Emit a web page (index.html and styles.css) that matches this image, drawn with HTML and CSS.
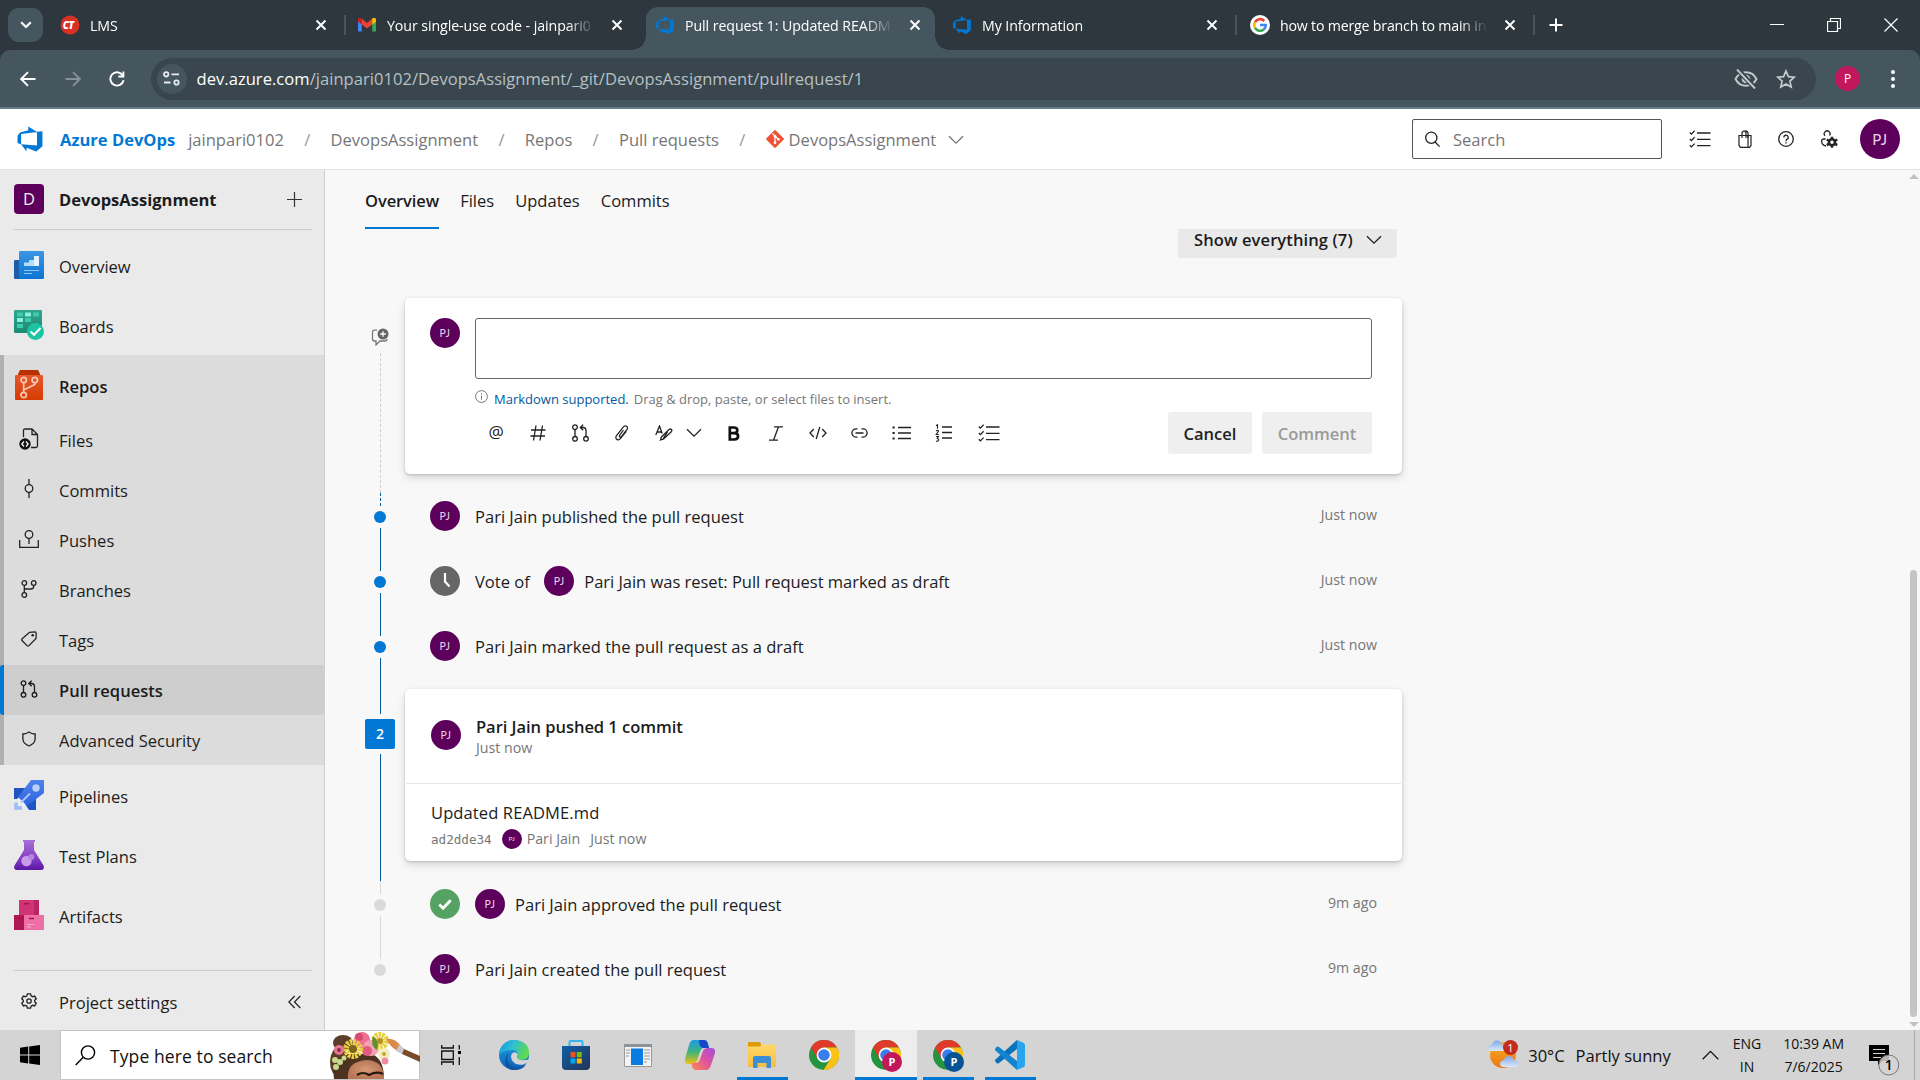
FILE: index.html
```html
<!DOCTYPE html>
<html lang="en">
<head>
<meta charset="utf-8">
<title>Pull request 1: Updated README.md - Repos</title>
<link rel="stylesheet" href="styles.css">
</head>
<body>
<svg class="defs" aria-hidden="true">
  <defs>
    <linearGradient id="g-blue" x1="0" y1="0" x2="0" y2="1"><stop offset="0" stop-color="#3c96e4"/><stop offset="1" stop-color="#0b74d4"/></linearGradient>
    <linearGradient id="g-green" x1="0" y1="0" x2="0" y2="1"><stop offset="0" stop-color="#2ea58c"/><stop offset="1" stop-color="#1d8a74"/></linearGradient>
    <linearGradient id="g-red" x1="0" y1="0" x2="0" y2="1"><stop offset="0" stop-color="#e5592d"/><stop offset="1" stop-color="#d73b02"/></linearGradient>
    <linearGradient id="g-pipe" x1="0" y1="0" x2="0" y2="1"><stop offset="0" stop-color="#5083ec"/><stop offset="1" stop-color="#2b63dc"/></linearGradient>
    <linearGradient id="g-test" x1="0" y1="0" x2="0" y2="1"><stop offset="0" stop-color="#a96fd6"/><stop offset=".6" stop-color="#8340c4"/><stop offset="1" stop-color="#5a17a4"/></linearGradient>
    <linearGradient id="g-edge1" x1="0" y1="0" x2="1" y2=".3"><stop offset="0" stop-color="#1794dd"/><stop offset=".5" stop-color="#2dc0d4"/><stop offset="1" stop-color="#5fd853"/></linearGradient>
    <linearGradient id="g-edge2" x1="0" y1="0" x2="0" y2="1"><stop offset="0" stop-color="#1fa4e6"/><stop offset="1" stop-color="#0c5fb8"/></linearGradient>
    <linearGradient id="g-store" x1="0" y1="0" x2="1" y2="1"><stop offset="0" stop-color="#0f5fa8"/><stop offset="1" stop-color="#233457"/></linearGradient>
    <linearGradient id="g-cop1" x1="0" y1="0" x2="0" y2="1"><stop offset="0" stop-color="#1b9be8"/><stop offset=".5" stop-color="#3fb37c"/><stop offset="1" stop-color="#f2c20f"/></linearGradient>
    <linearGradient id="g-cop2" x1="1" y1="0" x2="0" y2="1"><stop offset="0" stop-color="#a24be0"/><stop offset=".5" stop-color="#e0539b"/><stop offset="1" stop-color="#fb8a4e"/></linearGradient>
    <linearGradient id="g-folder" x1="0" y1="0" x2="0" y2="1"><stop offset="0" stop-color="#ffd869"/><stop offset="1" stop-color="#f6bd3c"/></linearGradient>
    <linearGradient id="g-sun" x1="0" y1="0" x2="0" y2="1"><stop offset="0" stop-color="#f3b024"/><stop offset="1" stop-color="#ef7513"/></linearGradient>
    <linearGradient id="g-cloud" x1="0" y1="0" x2="0" y2="1"><stop offset="0" stop-color="#82a8e4"/><stop offset="1" stop-color="#dbe8fb"/></linearGradient>
    <radialGradient id="g-face"><stop offset="0" stop-color="#d79a78"/><stop offset="1" stop-color="#b87655"/></radialGradient>
  </defs>
  <symbol id="i-close" viewBox="0 0 12 12"><path d="M1.500 1.500l9 9M10.500 1.500l-9 9" stroke="currentColor" stroke-width="1.900" fill="none"/></symbol>
  <symbol id="i-chev" viewBox="0 0 16 10"><path d="M1 1.200l7 7 7-7" stroke="currentColor" stroke-width="1.300" fill="none"/></symbol>
  <symbol id="i-azdo" viewBox="0 0 18 18"><path d="M17 4v9.700l-4 3.300-6.200-2.300V17L3.300 12.400l10.200.8V4.400zM13.600 4.500L7.900 1v2.300L2.600 4.900 1 6.900v4.600l2.300 1V5.800z" fill="#0078d4"/></symbol>
  <symbol id="i-pr" viewBox="0 0 18 18"><g fill="none" stroke="currentColor" stroke-width="1.300"><circle cx="3.500" cy="3.200" r="2.300"/><circle cx="3.500" cy="14.800" r="2.300"/><circle cx="14.500" cy="14.800" r="2.300"/><path d="M3.500 5.500v7M14.500 12.500V6.500a3 3 0 0 0-3-3H9M11.700.7L8.800 3.500l2.900 2.800"/></g></symbol>
  <symbol id="i-checks" viewBox="0 0 22 18"><g fill="none" stroke="currentColor" stroke-width="1.300"><path d="M8 3h13.500M8 9.300h13.500M8 15.600h13.500M.8 2.500l1.600 1.600L5.600.8M.8 9l1.600 1.600L5.600 7.300M.8 15.300l1.600 1.600 3.200-3.300"/></g></symbol>
  <symbol id="i-chrome" viewBox="0 0 30 30"><circle cx="15" cy="15" r="15" fill="#24943f"/><path d="M2 7.500A15 15 0 0 1 28 7.500H15L8.500 18.700z" fill="#df3a2c"/><path d="M28 7.500A15 15 0 0 1 14.500 30l7-11.300L15 7.500z" fill="#fbc116"/><circle cx="15" cy="15" r="7.400" fill="#fff"/><circle cx="15" cy="15" r="5.800" fill="#3a7ded"/></symbol>
</svg>

<header class="tabstrip">
  <button class="tab-search"><svg width="12" height="8" viewBox="0 0 12 8"><path d="M1.200 1.200L6 6l4.800-4.800" stroke="#fff" stroke-width="2.200" fill="none"/></svg></button>
  <div class="tab first">
    <svg class="fav" width="20" height="22" viewBox="0 0 20 22"><circle cx="10" cy="11" r="9.500" fill="#d93025"/><text x="2.800" y="14.500" font-family="Open Sans" font-size="10" font-weight="800" font-style="italic" fill="#fff" letter-spacing="-.5">CT</text></svg>
    <span class="tab-title">LMS</span><svg class="x" width="12" height="12"><use href="#i-close"/></svg><i class="sep"></i>
  </div>
  <div class="tab">
    <svg class="fav" width="20" height="16" viewBox="0 0 20 16"><path d="M1 3v11.500h3.800V6z" fill="#4285f4"/><path d="M19 3v11.500h-3.800V6z" fill="#34a853"/><path d="M4.800 1.500L10 6l5.200-4.500v6L10 11.500 4.800 7.500z" fill="#ea4335"/><path d="M1 3C1 .8 3.200.2 4.800 1.500v6L1 4.700z" fill="#c5221f"/><path d="M19 3c0-2.200-2.200-2.800-3.800-1.500v6L19 4.700z" fill="#fbbc04"/></svg>
    <span class="tab-title">Your single-use code - jainpari0</span><svg class="x" width="12" height="12"><use href="#i-close"/></svg>
  </div>
  <div class="tab active">
    <svg class="fav" width="22" height="22"><use href="#i-azdo"/></svg>
    <span class="tab-title">Pull request 1: Updated READM</span><svg class="x" width="12" height="12"><use href="#i-close"/></svg>
  </div>
  <div class="tab">
    <svg class="fav" width="22" height="22"><use href="#i-azdo"/></svg>
    <span class="tab-title">My Information</span><svg class="x" width="12" height="12"><use href="#i-close"/></svg><i class="sep"></i>
  </div>
  <div class="tab">
    <svg class="fav" width="20" height="20" viewBox="0 0 20 20"><circle cx="10" cy="10" r="10" fill="#fff"/><g fill="none" stroke-width="2.600"><path d="M14.300 6A5.800 5.800 0 0 0 5 7.100" stroke="#ea4335"/><path d="M5 7.100a5.800 5.800 0 0 0 0 5.800" stroke="#fbbc05"/><path d="M5 12.900a5.800 5.800 0 0 0 8.700 1.500" stroke="#34a853"/><path d="M13.700 14.400c1.500-1.200 2.100-2.700 2.100-4.400H10" stroke="#4285f4"/></g></svg>
    <span class="tab-title snug">how to merge branch to main in</span><svg class="x" width="12" height="12"><use href="#i-close"/></svg><i class="sep"></i>
  </div>
  <svg class="newtab" width="14" height="14" viewBox="0 0 14 14"><path d="M7 .5v13M.5 7h13" stroke="#fff" stroke-width="2"/></svg>
  <div class="win">
    <svg width="14" height="14" viewBox="0 0 14 14"><path d="M0 6.500h14" stroke="#fff"/></svg>
    <svg width="14" height="14" viewBox="0 0 14 14"><path d="M.5 3.500h10v10h-10zM3.500 3.500v-3h10v10h-3" fill="none" stroke="#fff" stroke-width="1.200"/></svg>
    <svg width="14" height="14" viewBox="0 0 14 14"><path d="M.5.5l13 13M13.500.5l-13 13" stroke="#fff" stroke-width="1.200"/></svg>
  </div>
</header>

<div class="toolbar-wrap"><div class="toolbar">
  <svg width="16" height="16" viewBox="0 0 16 16"><path d="M15.500 8H1.500M8 1.200L1.200 8 8 14.800" fill="none" stroke="#fff" stroke-width="1.900"/></svg>
  <svg width="16" height="16" viewBox="0 0 16 16"><path d="M.5 8h14M8 1.200L14.800 8 8 14.800" fill="none" stroke="#84929a" stroke-width="1.900"/></svg>
  <svg width="16" height="16" viewBox="0 0 16 16"><path d="M13.500 4A6.700 6.700 0 1 0 14.600 9.300M14.400.5v5H9.300" fill="none" stroke="#fff" stroke-width="1.900"/></svg>
  <div class="omnibox">
    <span class="site"><svg width="17" height="15" viewBox="0 0 17 15"><g fill="none" stroke="#e8eaed" stroke-width="1.800"><circle cx="3.200" cy="3.300" r="2.200"/><path d="M8.500 3.300H16M1 11.500h6.500"/><circle cx="13.500" cy="11.500" r="2.200"/></g></svg></span>
    <span class="url"><b>dev.azure.com</b>/jainpari0102/DevopsAssignment/_git/DevopsAssignment/pullrequest/1</span>
    <svg class="eye" width="24" height="20" viewBox="0 0 24 20"><path d="M1.500 10C4 5 8 3.200 12 3.200S20 5 22.500 10C20 15 16 16.800 12 16.800S4 15 1.500 10z" fill="none" stroke="#c3c9cc" stroke-width="1.900"/><circle cx="12" cy="10" r="4.300" fill="#c3c9cc"/><path d="M3 0l18 19" stroke="#39464d" stroke-width="5"/><path d="M3 0.500l18 19" stroke="#c3c9cc" stroke-width="1.900"/></svg>
    <svg class="star" width="20" height="20" viewBox="0 0 20 20"><path d="M10 2l2.400 5.600 6 .5-4.500 4 1.300 5.900L10 14.900 4.800 18l1.300-5.900-4.500-4 6-.5z" fill="none" stroke="#c3c9cc" stroke-width="1.700"/></svg>
  </div>
  <span class="profile">P</span>
  <svg width="6" height="20" viewBox="0 0 6 20"><g fill="#fff"><circle cx="3" cy="3" r="2"/><circle cx="3" cy="10" r="2"/><circle cx="3" cy="17" r="2"/></g></svg>
</div></div>

<div class="suite">
  <svg width="28" height="28"><use href="#i-azdo"/></svg>
  <nav class="crumbs">
    <strong>Azure DevOps</strong><span>jainpari0102</span><em>/</em><span>DevopsAssignment</span><em>/</em><span>Repos</span><em>/</em><span>Pull requests</span><em>/</em>
    <svg class="git" width="18" height="18" viewBox="0 0 18 18"><path d="M9 .3L17.700 9 9 17.700.3 9z" fill="#f05033" stroke="#f05033" stroke-linejoin="round"/><path d="M6.500 3.500l2.500 2.500v7M9.500 6.500l3 3" stroke="#fff" stroke-width="1.200" fill="none"/><circle cx="9" cy="6.200" r="1.400" fill="#fff"/><circle cx="9" cy="12.800" r="1.400" fill="#fff"/><circle cx="12.300" cy="9.300" r="1.400" fill="#fff"/></svg>
    <span>DevopsAssignment</span><svg class="crumb-chev" width="16" height="10"><use href="#i-chev"/></svg>
  </nav>
  <div class="search"><svg width="17" height="17" viewBox="0 0 17 17"><circle cx="7.300" cy="6.800" r="5.600" fill="none" stroke="#222" stroke-width="1.300"/><path d="M11 11l4.600 4.600" stroke="#222" stroke-width="1.300"/></svg><span>Search</span></div>
  <div class="suite-icons">
    <svg width="22" height="18"><use href="#i-checks"/></svg>
    <svg width="14" height="18" viewBox="0 0 14 18"><g fill="none" stroke="#222" stroke-width="1.200"><path d="M1 5.500h12v10l-1.500 1.800h-9L1 15.500zM4 8V2.500L5.500 1h1L8 2.500V8M7 1.200L8.500 1 10 2.500V8"/><path d="M10 5.500v12" /></g></svg>
    <svg width="16" height="16" viewBox="0 0 16 16"><circle cx="8" cy="8" r="7.300" fill="none" stroke="#222" stroke-width="1.300"/><path d="M5.800 6.500a2.200 2.200 0 1 1 3.300 1.800C8.200 8.900 8 9.200 8 10.200M8 11.300v1.300" fill="none" stroke="#222" stroke-width="1.300"/></svg>
    <svg width="18" height="18" viewBox="0 0 18 18"><path d="M9.500 5.500A2.900 2.900 0 1 0 5 5.800M5.500 9h-2A2 2 0 0 0 1.600 11c0 2.500 1.500 4.500 4.400 5" fill="none" stroke="#222" stroke-width="1.300"/><circle cx="12" cy="12.300" r="3" fill="none" stroke="#222" stroke-width="2.600"/><path d="M12 6.800v2M12 15.800v2M6.800 9.500l2 1.200M15.200 13.900l2 1.200M6.800 15.100l2-1.200M15.200 10.700l2-1.200" stroke="#222" stroke-width="2.400"/></svg>
  </div>
  <span class="avatar xl">PJ</span>
</div>

<div class="workspace">
  <aside class="sidebar">
    <div class="project"><span class="proj-tile">D</span><strong>DevopsAssignment</strong><svg width="15" height="15" viewBox="0 0 15 15"><path d="M7.500 0v15M0 7.500h15" stroke="#333" stroke-width="1.200"/></svg></div>
    <a class="hub"><span class="ico"><svg width="30" height="28" viewBox="0 0 30 28"><rect y="9" width="8" height="19" rx="1" fill="#1a5ea8"/><rect x="5" width="25" height="28" rx="1.200" fill="url(#g-blue)"/><path d="M10 15v-3.500h5V9h5V5h5v10z" fill="#b5dcfa"/><path d="M20 15V5h5v10z" fill="#e4f3ff"/><path d="M10 19.500h15M10 22.500h8" stroke="#8ec5f4" stroke-width="1"/></svg></span>Overview</a>
    <a class="hub"><span class="ico"><svg width="30" height="30" viewBox="0 0 30 30"><rect width="28" height="23" rx="1.200" fill="url(#g-green)"/><g fill="#3dcaae"><path d="M3 2.500h6v4H3zM19 2.500h6v4h-6zM11 8h6v4h-6zM3 14h6v4H3z"/></g><path d="M11 2.500h6v4h-6zM3 8h6v4H3z" fill="#86f0da"/><circle cx="21.500" cy="21.500" r="8.500" fill="#1cc4a4"/><path d="M16.500 21.500l3.500 3.300 6.500-6.800" stroke="#fff" stroke-width="2" fill="none"/></svg></span>Boards</a>
    <section class="group">
      <a class="hub current"><span class="ico"><svg width="28" height="30" viewBox="0 0 28 30"><path d="M5 0h18l2 4v4H3V4z" fill="#b83200"/><path d="M0 5.500Q0 5 1 5h26q1 0 1 .5V29q0 1-1 1H1q-1 0-1-1z" fill="url(#g-red)"/><g fill="none" stroke="#f9c9b6" stroke-width="1.700"><circle cx="8.700" cy="10" r="2.700"/><circle cx="8.700" cy="25" r="2.700"/><circle cx="19.800" cy="10" r="2.700"/><path d="M8.700 13v9M19.800 13v1.500L8.700 20"/></g></svg></span>Repos</a>
      <a class="sub"><span class="ico"><svg width="20" height="22" viewBox="0 0 20 22"><path d="M4.500 9V2.500q0-1.500 1.500-1.500h7l5.500 5.500V18q0 1.500-1.500 1.500h-5M13 1v5.500h5.500" fill="none" stroke="#222" stroke-width="1.300"/><circle cx="6" cy="16" r="5.700" fill="#111"/><path d="M5 13.500L2.800 16 5 18.500M7 13.500L9.200 16 7 18.500" fill="none" stroke="#fff" stroke-width="1.200"/></svg></span>Files</a>
      <a class="sub"><span class="ico"><svg width="10" height="20" viewBox="0 0 10 20"><circle cx="5" cy="9.500" r="3.800" fill="none" stroke="#222" stroke-width="1.300"/><path d="M5 0v5.700M5 13.300V19" stroke="#222" stroke-width="1.300"/></svg></span>Commits</a>
      <a class="sub"><span class="ico"><svg width="20" height="18" viewBox="0 0 20 18"><circle cx="10" cy="4.500" r="3.800" fill="none" stroke="#222" stroke-width="1.300"/><path d="M10 8.300V14M.7 10v7.300h18.600V10" fill="none" stroke="#222" stroke-width="1.300"/></svg></span>Pushes</a>
      <a class="sub"><span class="ico"><svg width="16" height="18" viewBox="0 0 16 18"><g fill="none" stroke="#222" stroke-width="1.300"><circle cx="3.300" cy="3" r="2.300"/><circle cx="12.700" cy="3" r="2.300"/><circle cx="3.300" cy="15" r="2.300"/><path d="M3.300 5.300v7.400M12.700 5.300v1q0 2.700-2.700 2.700H3.300"/></g></svg></span>Branches</a>
      <a class="sub"><span class="ico"><svg width="16" height="16" viewBox="0 0 16 16"><path d="M8.500 1.300L14 .8q1.200 0 1.200 1.200L15 7.500 8 14.600q-1 1-2 0L1.200 9.800q-1-1 0-2z" fill="none" stroke="#222" stroke-width="1.300"/><circle cx="11.700" cy="4.300" r="1.300" fill="#222"/></svg></span>Tags</a>
      <a class="sub selected"><span class="ico"><svg width="18" height="18"><use href="#i-pr"/></svg></span>Pull requests</a>
      <a class="sub"><span class="ico"><svg width="14" height="16" viewBox="0 0 14 16"><path d="M7 1Q4 3.200.9 3v5q0 4.500 6.100 7 6.100-2.500 6.100-7V3Q10 3.200 7 1z" fill="none" stroke="#222" stroke-width="1.300"/></svg></span>Advanced Security</a>
    </section>
    <a class="hub"><span class="ico"><svg width="30" height="30" viewBox="0 0 30 30"><path d="M0 8h13L3 19H0zM22 16v14h-7l-4-6z" fill="#1f55c0"/><path d="M17 0h13v13L13 26 4 17z" fill="url(#g-pipe)"/><circle cx="22" cy="8" r="3.700" fill="#b9d0fb"/><path d="M2 22.500v5.500H8" fill="none" stroke="#9dbcf8" stroke-width="3.500"/><path d="M5 19l3 1.500 2 2.500 2 2.500-3 .5-4-4z" fill="#e8f0ff"/><path d="M7 22.500l9-9" stroke="#a9c4fa" stroke-width="2"/></svg></span>Pipelines</a>
    <a class="hub"><span class="ico"><svg width="30" height="30" viewBox="0 0 30 30"><path d="M9 0h12v2h-1v8l9.500 15.500q1.500 4.500-2.500 4.500H3q-4 0-2.500-4.500L10 10V2H9z" fill="url(#g-test)"/><circle cx="12.500" cy="21" r="5.200" fill="#c79bea"/><circle cx="17.300" cy="17" r="3" fill="#b584de"/></svg></span>Test Plans</a>
    <a class="hub"><span class="ico"><svg width="30" height="30" viewBox="0 0 30 30"><path d="M5 0h20v15H5z" fill="#d03474"/><path d="M20 0h5v15h-5z" fill="#b92463"/><path d="M0 15h10v15H0z" fill="#b11655"/><path d="M10 15h20v15H10z" fill="#ee6fa5"/><path d="M10 3.800h5M15 18.500h5M5 18.500h5" stroke="#a3144f" stroke-width="1.600"/><path d="M13 24.500h7M13 27h4" stroke="#f8a9cb"/></svg></span>Artifacts</a>
    <div class="settings"><span class="ico"><svg width="16" height="16" viewBox="0 0 16 16"><path d="M6.400.8h3.200l.5 2.100 1.400.8 2.100-.6 1.600 2.700L13.700 7.300v1.500l1.500 1.400-1.600 2.700-2.100-.6-1.400.8-.5 2.100H6.400l-.5-2.100-1.400-.8-2.100.6L.8 10.200l1.500-1.400V7.300L.8 5.800l1.600-2.700 2.100.6 1.400-.8z" fill="none" stroke="#222" stroke-width="1.300"/><circle cx="8" cy="8" r="2.200" fill="none" stroke="#222" stroke-width="1.300"/></svg></span>Project settings<svg class="collapse" width="13" height="14" viewBox="0 0 13 14"><path d="M6.700 1L.9 7l5.800 6M12.300 1L6.500 7l5.800 6" fill="none" stroke="#222" stroke-width="1.200"/></svg></div>
  </aside>

  <main>
    <nav class="pivots"><a class="on">Overview</a><a>Files</a><a>Updates</a><a>Commits</a></nav>
    <div class="filter"><button>Show everything (7)<svg width="16" height="10"><use href="#i-chev"/></svg></button></div>

    <div class="timeline">
      <div class="item compose">
        <div class="rail"><svg class="addc" width="18" height="18" viewBox="0 0 18 18"><path d="M6 2.200H3.500Q1.500 2.200 1.500 4.200V11q0 2 2 2H5v4l4-4h5q2 0 2-2" fill="none" stroke="#777" stroke-width="1.300"/><circle cx="12" cy="6" r="5.500" fill="#666"/><path d="M12 3.200v5.600M9.200 6h5.600" stroke="#fff" stroke-width="1.300"/></svg><i class="line dash"></i></div>
        <div class="card editor">
          <span class="avatar">PJ</span>
          <div class="edit-body">
            <div class="textarea"></div>
            <div class="hint"><svg width="13" height="13" viewBox="0 0 13 13"><circle cx="6.500" cy="6.500" r="5.900" fill="none" stroke="#777"/><path d="M6.500 5.500v4.300M6.500 3v1.400" stroke="#777"/></svg><a>Markdown supported.</a><span>Drag &amp; drop, paste, or select files to insert.</span></div>
            <div class="tools">
              <span class="tool glyph">@</span>
              <span class="tool"><svg width="16" height="16" viewBox="0 0 16 16"><path d="M6 .5l-2.500 15M12.500.5L10 15.500M1 5h14.500M.5 11H15" fill="none" stroke="#222" stroke-width="1.300"/></svg></span>
              <span class="tool"><svg width="19" height="18"><use href="#i-pr"/></svg></span>
              <span class="tool"><svg width="16" height="16" viewBox="0 0 16 16"><path d="M9.500 5L5.700 10.200q-.7 1.200.2 1.800.9.500 1.700-.5l5.200-6.800q1.500-2.200-.3-3.400-1.800-1-3.500 1L2.500 10.500q-1.500 2.500.3 3.900 2 1.200 3.800-1L12.500 6" fill="none" stroke="#222" stroke-width="1.250"/></svg></span>
              <span class="tool"><svg width="18" height="16" viewBox="0 0 18 16"><path d="M.8 10L4.500 1l2.700 7.500M2 7h4.500M7 14.500l-1.500.5.8-2.800L14 4.500q1.500-1 2.500 0 .8 1-.2 2.200L8.600 14zM7.500 14.800L12.500 7" fill="none" stroke="#222" stroke-width="1.300"/></svg></span>
              <svg class="tool-chev" width="16" height="10"><use href="#i-chev"/></svg>
              <span class="tool"><svg width="12" height="15" viewBox="0 0 12 15"><path d="M1.800 1.500h4q3.500 0 3.500 2.800T5.800 7.200h-4zM1.800 7.200h4.500q3.800 0 3.800 3.100t-3.800 3.200H1.800z" fill="none" stroke="#111" stroke-width="2.700"/></svg></span>
              <span class="tool"><svg width="14" height="15" viewBox="0 0 14 15"><path d="M5 .8h9M0 14.200h9M9.500.8l-5 13.400" fill="none" stroke="#222" stroke-width="1.300"/></svg></span>
              <span class="tool"><svg width="18" height="14" viewBox="0 0 18 14"><path d="M4.800 3L1 7l3.800 4M13.200 3L17 7l-3.800 4M10.800 1L7.200 13" fill="none" stroke="#222" stroke-width="1.300"/></svg></span>
              <span class="tool"><svg width="17" height="10" viewBox="0 0 17 10"><path d="M6.500.9H5a4.100 4.100 0 0 0 0 8.200h1.500M10.500.9H12a4.100 4.100 0 0 1 0 8.200h-1.500M4.500 5h8" fill="none" stroke="#222" stroke-width="1.300"/></svg></span>
              <span class="tool"><svg width="19" height="14" viewBox="0 0 19 14"><path d="M6 1.500h13M6 7h13M6 12.500h13" stroke="#222" stroke-width="1.300"/><path d="M.5 1.500h2.200M.5 7h2.200M.5 12.500h2.200" stroke="#222" stroke-width="2.200"/></svg></span>
              <span class="tool"><svg width="17" height="18" viewBox="0 0 17 18"><path d="M7 3h10M7 8.500h10M7 14h10" stroke="#222" stroke-width="1.300"/><path d="M1 1.800L2.500.8v4M1 7q2.500-1.500 2.500.3L1.200 10.500h2.600M1 12.500h2.500L2.200 14.500q1.600.2 1.600 1.400Q3.200 17.800 1 17" fill="none" stroke="#222" stroke-width="1.100"/></svg></span>
              <span class="tool wide"><svg width="22" height="18"><use href="#i-checks"/></svg></span>
              <button class="btn cancel">Cancel</button><button class="btn off">Comment</button>
            </div>
          </div>
        </div>
      </div>
      <div class="item short"><div class="rail"><i class="line top dash blue"></i><b class="dot"></b><i class="line"></i></div><div class="entry"><span class="avatar">PJ</span><p>Pari Jain published the pull request</p><time>Just now</time></div></div>
      <div class="item"><div class="rail"><i class="line top"></i><b class="dot"></b><i class="line"></i></div><div class="entry"><svg width="30" height="30" viewBox="0 0 30 30"><circle cx="15" cy="15" r="15" fill="#666"/><path d="M15 7v8.500l4.500 5" stroke="#fff" stroke-width="2.200" fill="none"/></svg><p class="vote">Vote of</p><span class="avatar">PJ</span><p class="tight reset">Pari Jain was reset: Pull request marked as draft</p><time>Just now</time></div></div>
      <div class="item"><div class="rail"><i class="line top"></i><b class="dot"></b><i class="line"></i></div><div class="entry"><span class="avatar">PJ</span><p>Pari Jain marked the pull request as a draft</p><time>Just now</time></div></div>
      <div class="item push"><div class="rail"><i class="line top"></i><b class="count">2</b><i class="line"></i></div>
        <div class="card commit">
          <div class="commit-head"><span class="avatar">PJ</span><div><strong>Pari Jain pushed 1 commit</strong><small>Just now</small></div></div>
          <div class="commit-row"><p>Updated README.md</p><div class="meta"><code>ad2dde34</code><span class="avatar xs">PJ</span><span class="who">Pari Jain</span><span>Just now</span></div></div>
        </div></div>
      <div class="item short old"><div class="rail"><i class="line top"></i><b class="dot"></b><i class="line"></i></div><div class="entry"><svg width="30" height="30" viewBox="0 0 30 30"><circle cx="15" cy="15" r="15" fill="#55a362"/><path d="M9.300 15.500l3.800 3.800 7.600-8" stroke="#fff" stroke-width="2.800" fill="none"/></svg><span class="avatar second">PJ</span><p class="tight">Pari Jain approved the pull request</p><time>9m ago</time></div></div>
      <div class="item old last"><div class="rail"><i class="line top"></i><b class="dot"></b></div><div class="entry"><span class="avatar">PJ</span><p>Pari Jain created the pull request</p><time>9m ago</time></div></div>
    </div>
  </main>
  <div class="scrollbar"><i class="up"></i><i class="thumb"></i><i class="down"></i></div>
</div>

<footer class="taskbar">
  <span class="start"><svg width="20" height="20" viewBox="0 0 20 20"><path d="M0 2.800L8.200 1.600v7.900H0zM9.200 1.500L20 0v9.500H9.200zM0 10.500h8.200v7.900L0 17.200zM9.200 10.500H20V20L9.200 18.500z" fill="#000"/></svg></span>
  <div class="winsearch">
    <svg width="21" height="21" viewBox="0 0 21 21"><circle cx="13" cy="7.500" r="6.600" fill="none" stroke="#000" stroke-width="1.400"/><path d="M8.300 12.200L.7 20" stroke="#000" stroke-width="1.400"/></svg>
    <span>Type here to search</span>
    <svg class="art" width="90" height="47" viewBox="0 0 90 47">
      <ellipse cx="13" cy="11" rx="10" ry="8" fill="#5b3d28"/><ellipse cx="9" cy="30" rx="9" ry="15" fill="#5b3d28"/><path d="M4 47q-3-20 14-25h24q12 5 12 25z" fill="#4d3221"/>
      <path d="M18 47q-2-17 18-19 18 0 18 19z" fill="url(#g-face)"/><path d="M27 43q6-4 12 0 8-4 14-1" fill="none" stroke="#2a1a12" stroke-width="2.200"/>
      <circle cx="32" cy="8" r="8" fill="#ef6f90"/><circle cx="29" cy="5" r="4" fill="#d94a74"/><circle cx="41" cy="16" r="8" fill="#f2a0b3"/><circle cx="37" cy="19" r="5" fill="#e25b80"/>
      <g fill="none" stroke="#e9cf3e" stroke-width="7" stroke-dasharray="2.200 .8"><circle cx="23" cy="17" r="6.500"/><circle cx="50" cy="9" r="5.500"/></g><circle cx="23" cy="17" r="4" fill="#7d6417"/><circle cx="50" cy="9" r="3" fill="#b3921f"/>
      <path d="M43 4q7 5 4 14-7-4-4-14z" fill="#5f8d34"/><circle cx="54" cy="22" r="6" fill="#f3eebf"/><circle cx="54" cy="22" r="2" fill="#c6a72e"/><circle cx="9" cy="18" r="5" fill="#ea7695"/><circle cx="9" cy="18" r="2" fill="#8a2b4a"/><circle cx="55" cy="29" r="3.500" fill="#ef8ba6"/>
      <g fill="#c6d98c"><circle cx="5" cy="28" r="3"/><circle cx="10" cy="30" r="3"/><circle cx="6" cy="35" r="3"/><circle cx="14" cy="26" r="2.500"/></g>
      <path d="M56 7q8-2 15 7l-3 5q-7-3-12-12z" fill="#d98c4a"/><path d="M69 13l6 4-3 5-6-3z" fill="#c9c9d1"/><path d="M74 17l16 7v6l-18-8z" fill="#7b4c2a"/>
    </svg>
  </div>
  <span class="app taskview"><svg width="20" height="20" viewBox="0 0 20 20"><path d="M.7 0v3h11.600V0M.7 6h11.600v8.500H.7zM.7 20v-3h11.600v3M18.300 0v4.500M18.300 12v8" fill="none" stroke="#111" stroke-width="1.300"/><path d="M17 6h3v3h-3z"/></svg></span>
  <span class="app"><svg width="30" height="30" viewBox="0 0 30 30"><circle cx="15" cy="15" r="15" fill="url(#g-edge2)"/><path d="M1 10Q5 0 15 0q15 1 15 13 0 7-7.500 7-5.500 0-4-3 1-7-5-7Q5 10 0 15z" fill="url(#g-edge1)"/><path d="M10 13q-4 6 1 12 7 5 16 0-5 6-14 4.800-8-3-6.500-11Q7 14 10 13z" fill="#11539c"/><path d="M18.500 14q-2-3-5-1-3 3 0 8 4 5 11 3.500l4-2 2-3-4 .5q-9 1-8.500-4 1-1 .5-2z" fill="#d4d4d4"/></svg></span>
  <span class="app"><svg width="30" height="30" viewBox="0 0 30 30"><path d="M8.500 7V2q0-1 1-1h11q1 0 1 1v5" fill="none" stroke="#35b4ee" stroke-width="2"/><path d="M1 6h28v20q0 4-4 4H5q-4 0-4-4z" fill="url(#g-store)"/><path d="M9.500 12h5v5.300h-5z" fill="#f25022"/><path d="M15.800 12h5v5.300h-5z" fill="#7fba00"/><path d="M9.500 18.500h5v5h-5z" fill="#00a4ef"/><path d="M15.800 18.500h5v5h-5z" fill="#ffb900"/></svg></span>
  <span class="app"><svg width="28" height="23" viewBox="0 0 28 23"><path d="M.5.5h27v22H.5z" fill="#f3f3f3" stroke="#9a9a9a"/><path d="M0 0h28v3H0z" fill="#8c9499"/><path d="M7 4.500h12v16.500H7z" fill="#0a7be0"/><path d="M2 6h4M2 9h4M2 12h3M20 6h6M20 9h6M20 12h6M20 15h6M20 18h3" stroke="#999"/></svg></span>
  <span class="app"><svg width="30" height="30" viewBox="0 0 30 30"><path d="M8.500 0H19q3 0 4 4l1 4h-5q-3 0-4 4l-3 9q-1 3-5 3H4q-5 0-4-5l4-14Q5.500 0 8.500 0z" fill="url(#g-cop1)"/><path d="M14 0h5q3 0 4 4l1 4h-6q-4-1-4-8z" fill="#1744c8"/><path d="M21.500 30H11q-3 0-4-4l-.5-3H11q3 0 4-4l3-8q1-3 5-3h3q5 0 4 5l-4 12q-1.500 5-4.500 5z" fill="url(#g-cop2)"/></svg></span>
  <span class="app run"><svg width="28" height="26" viewBox="0 0 28 26"><path d="M0 1q0-1 1-1h10q1 0 2 1.500V6H0z" fill="#dc9a08"/><path d="M0 4.500h12l2-2h13q1 0 1 1V25H0z" fill="url(#g-folder)"/><path d="M5 26V16q0-2 2-2h14q2 0 2 2v10h-4.500v-5h-9v5z" fill="#3c8fd6"/></svg></span>
  <span class="app"><svg width="30" height="30"><use href="#i-chrome"/></svg></span>
  <span class="app run front"><svg width="30" height="30"><use href="#i-chrome"/></svg><b class="badge pink">P</b></span>
  <span class="app run"><svg width="30" height="30"><use href="#i-chrome"/></svg><b class="badge navy">P</b></span>
  <span class="app run"><svg width="30" height="30" viewBox="0 0 30 30"><path d="M22 0v9L4 23q-1.500 1-2.500 0L.4 21.500q-1-1 0-2z" fill="#0a72ba"/><path d="M22 30v-9L4 7Q2.500 6 1.500 7L.4 8.500q-1 1 0 2z" fill="#1384d0"/><path d="M22 0l6.500 2.800Q30 3.500 30 5v20q0 1.500-1.500 2.200L22 30z" fill="#29a4ee"/></svg></span>
  <div class="tray">
    <svg class="weather" width="31" height="30" viewBox="0 0 31 30"><circle cx="15" cy="15" r="13" fill="url(#g-sun)"/><path d="M3 11q-3-.5-3-3 0-3 3.500-3Q5 .5 9 .5q4 0 5 4 4 .5 4 3.500 0 2.500-2 3z" fill="url(#g-cloud)"/><path d="M15 27q-3-.5-3-3.500 0-3 4-3.500 1.500-4 5-4t5 4q4.500 0 4.500 3.500 0 3-3 3.500z" fill="url(#g-cloud)"/><circle cx="22.500" cy="7.500" r="7.500" fill="#c42b1c"/><text x="22.500" y="11.500" text-anchor="middle" font-family="Open Sans" font-size="11" fill="#fff">1</text></svg>
    <span class="temp">30°C</span><span class="sky">Partly sunny</span>
    <svg class="tray-up" width="17" height="10" viewBox="0 0 17 10"><path d="M.7 9.200l7.800-7.800 7.800 7.800" fill="none" stroke="#111" stroke-width="1.300"/></svg>
    <span class="stack lang">ENG<br>IN</span>
    <span class="stack clock">10:39 AM<br>7/6/2025</span>
    <svg class="notif" width="31" height="31" viewBox="0 0 31 31"><path d="M0 0h20v16h-6l-5 4v-4H0z"/><path d="M4 4.500h12M4 8.500h12M4 12.500h8" stroke="#d4d4d4" stroke-width="1.200"/><circle cx="19.800" cy="20" r="10" fill="#d4d4d4" fill-opacity=".85" stroke="#777"/><text x="19.800" y="25.300" text-anchor="middle" font-family="Open Sans" font-size="14" font-weight="600">1</text></svg>
    <i class="peek"></i>
  </div>
</footer>
</body>
</html>
```

FILE: styles.css
```css
* { box-sizing: border-box; }
body {
  margin: 0; width: 1920px; height: 1080px; overflow: hidden;
  display: flex; flex-direction: column;
  font: 16.55px/24px "Open Sans", "Noto Sans", sans-serif; color: #1c1c1c;
}
svg { display: block; flex: none; }
p { margin: 0; }
button { font: inherit; border: 0; padding: 0; color: inherit; }
.defs { position: absolute; width: 0; height: 0; }

/* browser tabs */
.tabstrip { height: 50px; flex: none; background: #2d373d; display: flex; align-items: center; padding-left: 8px; color: #fff; font-size: 14.2px; }
.tab-search { width: 35px; height: 34px; border-radius: 11px; background: #45565f; display: grid; place-items: center; }
.tab { width: 298px; height: 50px; padding: 0 0 1px 17px; display: flex; align-items: center; position: relative; flex: none; }
.tab.first { width: 297px; }
.tab.first .x { margin-left: 17px; }
.tab.active { width: 289px; height: 43px; align-self: flex-end; margin-left: 8px; padding: 0 0 8px 9px; border-radius: 12px 12px 0 0; background: #45565f; }
.tab.active + .tab { margin-left: 2px; width: 296px; padding-left: 15px; }
.tab.active::before, .tab.active::after { content: ""; position: absolute; bottom: 0; width: 14px; height: 14px; }
.tab.active::before { left: -14px; background: radial-gradient(circle at 0 0, #0000 13.5px, #45565f 14px); }
.tab.active::after { right: -14px; background: radial-gradient(circle at 100% 0, #0000 13.5px, #45565f 14px); }
.fav { margin-right: 10px; width: 20px; }
.tab-title { width: 208px; flex: none; padding-top: 2px; white-space: nowrap; letter-spacing: -.08px; -webkit-mask: linear-gradient(90deg, #000 180px, #0000 208px); mask: linear-gradient(90deg, #000 180px, #0000 208px); }
.tab-title.snug { letter-spacing: -.2px; }
.x { margin-left: 16px; }
.sep { width: 2px; height: 20px; background: #45565f; margin-left: 17px; flex: none; }
.newtab { margin: 0 0 1px 18px; }
.win { margin-left: auto; display: flex; gap: 43px; padding-right: 22px; }

/* browser toolbar */
.toolbar-wrap { height: 59px; flex: none; background: #2d373d; border-bottom: 2px solid #6a7c86; }
.toolbar { height: 57px; background: #45565f; border-radius: 10px 10px 0 0; display: flex; align-items: center; padding-left: 20px; gap: 28.5px; }
.omnibox { width: 1665px; height: 42px; margin-left: -3px; border-radius: 21px; background: #39464d; display: flex; align-items: center; padding-left: 6px; }
.site { width: 30px; height: 30px; border-radius: 50%; background: #45565f; display: grid; place-items: center; margin-right: 10px; }
.url { color: #b7c0c5; flex: 1; padding-top: 1px; letter-spacing: .04px; }
.url b { color: #fff; font-weight: 400; }
.eye { margin-right: 18px; }
.star { margin-right: 20px; }
.profile { width: 25px; height: 25px; border-radius: 50%; background: #c2185b; color: #fff; font-size: 12px; line-height: 25px; text-align: center; margin: -1px 0 0 -9px; }
.toolbar > :last-child { margin-left: 1px; }

/* Azure DevOps suite header */
.suite { height: 61px; flex: none; background: #fff; border-bottom: 1px solid #e2e2e2; display: flex; align-items: center; padding: 0 20px 0 16px; }
.crumbs { display: flex; align-items: center; margin-left: 16px; padding-top: 2px; color: #767676; }
.crumbs strong { color: #0078d4; font-weight: 700; margin-right: 13px; }
.crumbs em { width: 46.7px; text-align: center; font-style: normal; color: #999; }
.git { margin: 0 5px 2px 0; }
.crumb-chev { margin-left: 12px; }
.search { margin-left: auto; width: 250px; height: 40px; border: 1px solid #555; border-radius: 2px; display: flex; align-items: center; gap: 12px; padding-left: 11px; color: #767676; }
.search span { padding-top: 2px; }
.suite-icons { display: flex; align-items: center; gap: 26px; margin: 0 22px 0 27px; color: #222; }
.suite-icons svg:first-child { margin-right: 1px; }
.avatar { width: 30px; height: 30px; flex: none; border-radius: 50%; background: #5c005c; color: #e6d5e6; font: 10.5px/30px Lato, sans-serif; text-align: center; letter-spacing: .6px; }
.avatar.xl { width: 40px; height: 40px; font-size: 15px; line-height: 40px; }
.avatar.xs { width: 20px; height: 20px; font-size: 6.5px; line-height: 20px; letter-spacing: .2px; }

.workspace { height: 860px; flex: none; display: flex; background: #f8f8f8; }

/* sidebar */
.sidebar { width: 325px; background: #eaeaea; border-right: 1px solid #cfcfcf; display: flex; flex-direction: column; }
.project { height: 60px; margin: 0 12px 5px 13px; border-bottom: 1px solid #ccc; display: flex; align-items: center; padding: 0 10px 1px 1px; }
.project strong { flex: 1; margin-left: 15px; font-weight: 700; letter-spacing: 0; padding-top: 2px; }
.proj-tile { width: 30px; height: 30px; border-radius: 4px; background: #5c005c; color: #eee; text-align: center; line-height: 29px; }
.hub, .sub { display: flex; align-items: center; height: 60px; padding-top: 3px; }
.ico { width: 30px; height: 30px; margin: -4px 15px 0 14px; display: grid; place-items: center; flex: none; }
.group { background: #dcdcdc; border-left: 4px solid #b0b0b0; }
.group .ico { margin-left: 10px; }
.sub { height: 50px; padding-top: 2px; }
.current { font-weight: 600; }
.sub.selected { font-weight: 600; background: #cecece; margin-left: -4px; border-left: 4px solid #0078d4; border-radius: 3px; }
.settings { margin: auto 12px 0 13px; height: 60px; border-top: 1px solid #ccc; display: flex; align-items: center; padding-top: 5px; }
.settings .ico { margin-left: 1px; }
.collapse { margin: -3px 11px 0 auto; }

/* main */
main { width: 1077px; padding-left: 40px; }
.pivots { height: 59px; display: flex; gap: 21px; }
.pivots a { height: 59px; padding-top: 19px; }
.pivots .on { font-weight: 600; letter-spacing: -.1px; border-bottom: 2px solid #0078d4; }
.filter { height: 69px; display: flex; justify-content: flex-end; padding-right: 5px; }
.filter button { width: 219px; height: 29px; background: #e9e9e9; border-radius: 0 0 3px 3px; display: flex; align-items: center; justify-content: space-between; padding: 0 15px 8px 16px; font-weight: 600; letter-spacing: .1px; white-space: nowrap; }
.item { display: flex; gap: 10px; height: 65px; }
.item.short { height: 56px; }
.item.compose { height: 195px; }
.item.push { height: 202px; }
.rail { width: 30px; display: flex; flex-direction: column; align-items: center; gap: 5px; flex: none; }
.line { width: 0; flex: 1; border-left: 1px solid #005a9e; margin-left: 1px; }
.line.top { flex: none; height: 22px; }
.short .top { height: 13px; }
.push .top { height: 35px; }
.old .line { border-color: #d8d8d8; }
.line.dash { border-left: 1px dashed #ccc; }
.line.dash.blue { border-color: #005a9e; }
.addc { margin: 30px 0 2px 0; }
.dot { width: 12px; height: 12px; border-radius: 50%; background: #0078d4; }
.old .dot { background: #dadada; }
.count { width: 30px; height: 30px; border-radius: 2px; background: #0078d4; color: #fff; font-size: 14px; line-height: 30px; text-align: center; font-weight: 600; }
.card { width: 997px; background: #fff; border-radius: 5px; box-shadow: 0 4px 9px rgba(0,0,0,.13), 0 1px 3px rgba(0,0,0,.16); }
.editor { height: 176px; padding: 20px 30px 0 25px; display: flex; gap: 15px; }
.edit-body { flex: 1; }
.textarea { height: 61px; border: 1px solid #666; border-radius: 3px; }
.hint { display: flex; align-items: center; height: 33px; padding-top: 7px; font-size: 13px; color: #767676; }
.hint svg { margin: -5px 6px 0 0; }
.hint a { color: #005a9e; margin-right: 5px; }
.tools { display: flex; align-items: center; height: 42px; color: #222; }
.tool { width: 42px; display: grid; place-items: center; }
.tool.wide { width: 48px; }
.tool.glyph { font-size: 17px; line-height: 20px; padding-bottom: 3px; }
.tool-chev { margin: 0 10.5px 0 1px; }
.btn { height: 42px; border-radius: 3px; background: #efefef; font-weight: 600; padding-top: 1px; }
.cancel { width: 84px; margin-left: auto; }
.off { width: 110px; margin-left: 10px; color: #9a9a9a; }
.entry { width: 997px; padding: 17px 25px 0; display: flex; align-items: flex-start; }
.short .entry { padding-top: 8px; }
.entry p { margin: 4px 0 0 15px; }
.entry .vote { margin-right: 14.5px; }
.entry .tight { margin-left: 10px; }
.entry .reset { letter-spacing: -.04px; }
.entry .second { margin-left: 15px; }
time { margin: 2px 0 0 auto; font-size: 14.2px; color: #767676; }
.commit { height: 172px; margin-top: 10px; padding: 0 1px; }
.commit-head { height: 95px; border-bottom: 1px solid #e6e6e6; display: flex; align-items: center; gap: 15px; padding-left: 25px; }
.commit-head .avatar { margin-top: -3px; }
.commit-head > div { display: flex; flex-direction: column; margin-top: 1px; }
.commit-head strong { font-weight: 600; line-height: 22px; letter-spacing: -.05px; }
.commit-head small { font-size: 14.2px; line-height: 20px; color: #767676; }
.commit-row { padding: 17px 25px; }
.commit-row p { letter-spacing: .1px; }
.meta { display: flex; align-items: center; height: 28px; font-size: 14.2px; color: #767676; }
.meta code { font: 12.6px "DejaVu Sans Mono", monospace; }
.meta .avatar { margin: 0 5px 0 10px; }
.who { margin-right: 10px; }
.scrollbar { margin-left: auto; width: 13px; display: flex; flex-direction: column; align-items: center; padding-top: 4px; }
.up, .down { border: 5px solid #0000; }
.up { border-bottom-color: #c1c1c1; border-top: 0; }
.down { border-top-color: #c1c1c1; border-bottom: 0; margin-top: 5px; }
.thumb { width: 7px; height: 447px; margin-top: 391px; border-radius: 4px; background: #c4c4c4; }

/* taskbar */
.taskbar { height: 50px; background: #d4d4d4; display: flex; align-items: center; color: #111; }
.start { width: 60px; padding-left: 20px; }
.winsearch { width: 360px; height: 50px; background: #fff; border: 1px solid #c4c4c4; display: flex; align-items: center; padding-left: 14px; font-size: 17.5px; letter-spacing: .1px; }
.winsearch span { margin-left: 14px; padding-top: 1px; }
.art { margin-left: auto; margin-right: -1px; align-self: flex-end; }
.app { width: 62px; height: 50px; display: grid; place-items: center; position: relative; }
.taskview { margin-right: 1px; }
.run::after { content: ""; position: absolute; left: 6px; right: 5px; bottom: 0; height: 3px; background: #0078d4; }
.front { background: #ededed; }
.front::after { left: 0; right: 0; }
.badge { position: absolute; left: 27px; top: 22px; width: 20px; height: 20px; border-radius: 50%; color: #fff; font-size: 11px; line-height: 20px; text-align: center; }
.pink { background: #c2185b; }
.navy { background: #075494; }
.tray { margin-left: auto; display: flex; align-items: center; white-space: nowrap; }
.temp { margin: 2px 11px 0 9px; }
.sky { margin-top: 2px; }
.tray-up { margin: 0 14px 0 31px; }
.stack { font-size: 14px; line-height: 23px; text-align: center; }
.clock { margin: 0 25px 0 22px; }
.notif { margin-top: 11px; }
.peek { width: 6px; height: 50px; margin-left: 14px; border-left: 1px solid #a8a8a8; }
```
